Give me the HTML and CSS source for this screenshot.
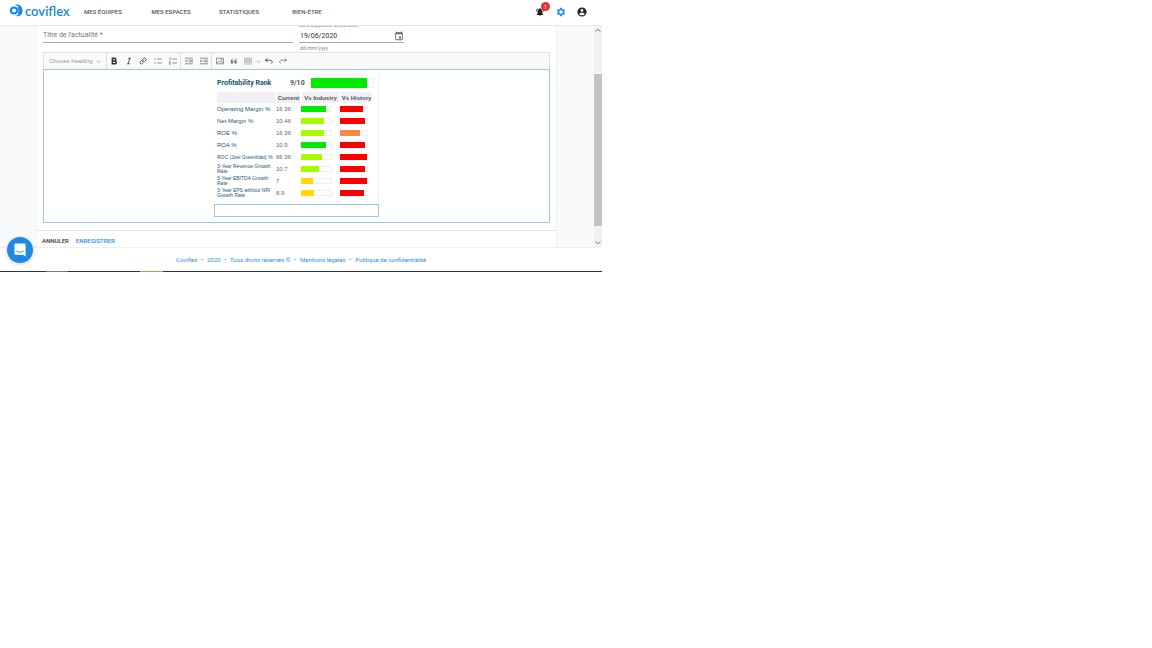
FILE: index.html
```html
<!DOCTYPE html>
<html lang="fr">
<head>
<meta charset="utf-8">
<meta name="viewport" content="width=device-width, initial-scale=1">
<title>Coviflex</title>
<link rel="stylesheet" href="styles.css">
</head>
<body>
<div class="app">
  <header class="header">
    <a class="logo" href="#">
      <svg class="logo-mark" viewBox="0 0 26 26" aria-hidden="true"><path d="M10 2C16-1 25 3 25 13S16 27 10 23C16 24 20 19 20 13S16 3 10 2Z" fill="#1786e8"/><circle cx="8" cy="13" r="6" fill="none" stroke="#1786e8" stroke-width="4"/><path d="M17 6q5 7 0 14" fill="none" stroke="#1786e8" stroke-width="5"/></svg>
      <span>coviflex</span>
    </a>
    <nav class="nav">
      <a href="#">MES ÉQUIPES</a><a href="#">MES ESPACES</a><a href="#">STATISTIQUES</a><a href="#">BIEN-ÊTRE</a>
    </nav>
    <div class="tools">
      <button class="tool" aria-label="Notifications"><svg viewBox="0 0 24 24"><path d="M7.6 4.1 6.200 2.700C3.800 4.500 2.200 7.300 2 10.500h2c.15-2.650 1.500-5 3.600-6.400zM20 10.500h2c-.15-3.200-1.700-6-4.100-7.800l-1.400 1.400c2 1.400 3.300 3.700 3.500 6.400zM18 11c0-3.100-1.600-5.600-4.500-6.300V4a1.500 1.500 0 0 0-3 0v.7C7.600 5.400 6 7.900 6 11v5l-2 2v1h16v-1l-2-2zM12 22a2 2 0 0 0 2-2h-4a2 2 0 0 0 2 2z"/></svg><span class="badge">1</span></button>
      <button class="tool tool-active" aria-label="Paramètres"><svg viewBox="0 0 24 24"><path fill-rule="evenodd" d="M19.400 13c.1-.7.1-1.300 0-2l2.100-1.600c.2-.2.200-.4.100-.6l-2-3.500c-.1-.2-.4-.3-.6-.2l-2.500 1c-.5-.4-1.100-.7-1.700-1l-.4-2.700c0-.2-.2-.4-.5-.4h-4c-.2 0-.4.200-.5.4L9 5.100c-.6.2-1.200.6-1.700 1l-2.500-1c-.2-.1-.5 0-.6.2l-2 3.500c-.1.200-.1.500.1.600L4.500 11c-.1.700-.1 1.300 0 2l-2.200 1.600c-.2.200-.2.400-.1.600l2 3.500c.1.200.4.300.6.200l2.500-1c.5.400 1.100.7 1.700 1l.4 2.700c.1.200.3.400.5.400h4c.3 0 .5-.2.500-.4l.4-2.700c.6-.2 1.200-.6 1.700-1l2.500 1c.2.100.5 0 .6-.2l2-3.500c.1-.2.100-.4-.1-.6zM12 16a4 4 0 1 1 0-8 4 4 0 0 1 0 8z"/></svg></button>
      <button class="tool" aria-label="Mon compte"><svg viewBox="0 0 24 24"><path fill-rule="evenodd" d="M12 1a11 11 0 1 0 0 22 11 11 0 0 0 0-22zm0 4a3.500 3.500 0 1 1 0 7 3.500 3.500 0 0 1 0-7zm0 15c-3 0-5.200-1.200-6.500-3.500C6 14.500 9.500 13.500 12 13.500s6 1 6.500 3C17.200 18.800 15 20 12 20z"/></svg></button>
    </div>
  </header>

  <main class="main">
    <div class="page">
      <form class="card">
        <div class="fields">
          <div class="field field-title">
            <label class="placeholder" for="title">Titre de l'actualité *</label>
            <input class="input" id="title" type="text">
          </div>
          <div class="field field-date">
            <label class="label" for="date">Date supposée de parution</label>
            <div class="date-line">
              <input class="input" id="date" type="text" value="19/06/2020">
              <button class="calendar" type="button" aria-label="Calendrier"><svg viewBox="0 0 24 24"><path fill-rule="evenodd" d="M5 3h1V1h2v2h8V1h2v2h1a2 2 0 0 1 2 2v15a2 2 0 0 1-2 2H5a2 2 0 0 1-2-2V5c0-1.100.9-2 2-2zm0 5v12h14V8zm7 5h5v5h-5z"/></svg></button>
            </div>
            <small class="hint">dd/mm/yyyy</small>
          </div>
        </div>

        <div class="editor">
          <div class="toolbar">
            <div class="heading">
              <select class="heading-select" aria-label="Choose heading"><option>Choose heading</option></select>
              <svg class="chevron" viewBox="0 0 10 10"><path d="m1 3 4 4 4-4"/></svg>
            </div>
            <div class="group group-text">
              <button type="button" class="btn" aria-label="Gras"><svg viewBox="0 0 20 20"><path class="heavy" d="M6 3h5a3.500 3.500 0 0 1 0 7H6zM6 10h6a3.500 3.500 0 0 1 0 7H6z"/></svg></button>
              <button type="button" class="btn" aria-label="Italique"><svg viewBox="0 0 20 20"><path class="dark" d="M8 3h7M5 17h7M12 3 8 17"/></svg></button>
              <button type="button" class="btn" aria-label="Lien"><svg viewBox="0 0 20 20"><path class="dark" d="m9 6 3-3c3-2 7 2 5 5l-4 4c-2 1-4 0-5-2M11 14l-3 3c-3 2-7-2-5-5l4-4c2-1 4 0 5 2"/></svg></button>
              <button type="button" class="btn" aria-label="Liste à puces"><svg viewBox="0 0 20 20"><path d="M8 5h12M8 15h12M0 5h4M0 15h4"/></svg></button>
              <button type="button" class="btn" aria-label="Liste numérotée"><svg viewBox="0 0 20 20"><path d="M8 5h12M8 15h12M1 3l2-1v6M0 12h4l-4 6h4"/></svg></button>
            </div>
            <div class="group">
              <button type="button" class="btn" aria-label="Augmenter le retrait"><svg viewBox="0 0 20 20"><path d="M0 3h20M9 8h11M9 12h11M0 17h20M0 10h5M3 7l3 3-3 3"/></svg></button>
              <button type="button" class="btn" aria-label="Réduire le retrait"><svg viewBox="0 0 20 20"><path d="M0 3h20M9 8h11M9 12h11M0 17h20M1 10h5M4 7l-3 3 3 3"/></svg></button>
            </div>
            <div class="group group-insert">
              <button type="button" class="btn" aria-label="Image"><svg viewBox="0 0 20 20"><path d="M1 3h18v14H1zM3 15l5-5 3 3 2-2 4 4M13 6h2v2h-2z"/></svg></button>
              <button type="button" class="btn" aria-label="Citation"><svg viewBox="0 0 20 20"><path d="M8 4C4 5 3 8 3 11M17 4c-4 1-5 4-5 7"/><path class="solid" d="M2 9h6v7H2zM11 9h6v7h-6z"/></svg></button>
              <button type="button" class="btn btn-table" aria-label="Tableau"><svg viewBox="0 0 20 20"><path class="thin" d="M1 3h18v15H1zM1 5h18M1 9h18M1 13h18M7 4v13M13 4v13"/></svg><svg class="chevron" viewBox="0 0 10 10"><path d="m1 3 4 4 4-4"/></svg></button>
              <button type="button" class="btn" aria-label="Annuler la saisie"><svg viewBox="0 0 20 20"><path class="dark" d="M6 4 1 8l5 4M1 8h12c7 0 6 7 2 8"/></svg></button>
              <button type="button" class="btn" aria-label="Rétablir"><svg viewBox="0 0 20 20"><path d="m14 4 5 4-5 4M19 8H7c-7 0-6 7-2 8"/></svg></button>
            </div>
          </div>

          <div class="content">
            <figure class="figure">
              <div class="ranking">
                <div class="rank"><strong class="rank-name">Profitability Rank</strong><strong class="rank-value">9/10</strong><span class="bar bar-rank"><i class="fill green" style="width:90%"></i></span></div>
                <table class="table">
                  <thead><tr><th class="col-name"></th><th class="col-current">Current</th><th class="col-industry">Vs Industry</th><th>Vs History</th></tr></thead>
                  <tbody>
                    <tr><td>Operating Margin %</td><td>16.36</td><td><span class="bar bar-industry"><i class="fill green" style="width:84%"></i></span></td><td><span class="bar"><i class="fill red" style="width:85%"></i></span></td></tr>
                    <tr><td>Net Margin %</td><td>10.46</td><td><span class="bar bar-industry"><i class="fill lime" style="width:78%"></i></span></td><td><span class="bar"><i class="fill red" style="width:94%"></i></span></td></tr>
                    <tr><td>ROE %</td><td>16.36</td><td><span class="bar bar-industry"><i class="fill lime" style="width:78%"></i></span></td><td><span class="bar"><i class="fill orange" style="width:75%"></i></span></td></tr>
                    <tr><td>ROA %</td><td>10.9</td><td><span class="bar bar-industry"><i class="fill green" style="width:84%"></i></span></td><td><span class="bar"><i class="fill red" style="width:92%"></i></span></td></tr>
                    <tr class="compact"><td>ROC (Joel Greenblatt) %</td><td>66.36</td><td><span class="bar bar-industry"><i class="fill lime" style="width:71%"></i></span></td><td><span class="bar"><i class="fill red" style="width:100%"></i></span></td></tr>
                    <tr class="compact"><td>3-Year Revenue Growth<br>Rate</td><td>10.7</td><td><span class="bar bar-industry"><i class="fill lime" style="width:60%"></i></span></td><td><span class="bar"><i class="fill red" style="width:92%"></i></span></td></tr>
                    <tr class="compact"><td>3-Year EBITDA Growth<br>Rate</td><td>7</td><td><span class="bar bar-industry"><i class="fill yellow" style="width:40%"></i></span></td><td><span class="bar"><i class="fill red" style="width:100%"></i></span></td></tr>
                    <tr class="compact"><td>3-Year EPS without NRI<br>Growth Rate</td><td>8.9</td><td><span class="bar bar-industry"><i class="fill yellow" style="width:44%"></i></span></td><td><span class="bar"><i class="fill red" style="width:89%"></i></span></td></tr>
                  </tbody>
                </table>
              </div>
              <figcaption class="caption" contenteditable="true"></figcaption>
            </figure>
          </div>
        </div>

        <div class="actions"><button type="button" class="action">ANNULER</button><button type="button" class="action action-save">ENREGISTRER</button></div>
      </form>
    </div>
    <div class="scrollbar" aria-hidden="true">
      <svg class="arrow" viewBox="0 0 10 10"><path d="m2 7 3-3 3 3"/></svg>
      <div class="track"><div class="thumb"></div></div>
      <svg class="arrow" viewBox="0 0 10 10"><path d="m2 3 3 3 3-3"/></svg>
    </div>
  </main>

  <footer class="footer"><a href="#">Coviflex</a><span>•</span><a href="#">2020</a><span>•</span><a href="#">Tous droits réservés ©</a><span>•</span><a href="#">Mentions légales</a><span>•</span><a href="#">Politique de confidentialité</a></footer>
  <div class="edge"></div>
  <button class="chat" type="button" aria-label="Discussion"><svg viewBox="0 0 28 32"><path d="M4 1h20a3 3 0 0 1 3 3v27l-6-4H4a3 3 0 0 1-3-3V4a3 3 0 0 1 3-3z" fill="#fff"/><path d="M6 19q8 6 16 0" fill="none" stroke="#1e88e5" stroke-width="2" stroke-linecap="round"/></svg></button>
</div>
</body>
</html>
```
FILE: styles.css
```css
* { box-sizing: border-box; }
body { margin: 0; background: #fff; font-family: Roboto, "Liberation Sans", sans-serif; font-size: 7px; color: #333; }
a { color: inherit; text-decoration: none; }
button, input, select { margin: 0; padding: 0; border: 0; background: none; font: inherit; color: inherit; outline: 0; }
svg { display: block; }

.app { position: relative; max-width: 602px; }

.header { display: flex; align-items: center; height: 26px; padding: 0 15px 2px 10px; border-bottom: 1px solid #e4e4e4; }
.logo { display: flex; align-items: center; gap: 2px; width: 59px; color: #1786e8; font: 600 13px/14px Lato, sans-serif; padding-bottom: 2px; }
.logo-mark { width: 13px; height: 13px; flex: none; }
.nav { display: flex; }
.nav a { width: 68px; text-align: center; font-size: 6px; font-weight: 500; line-height: 10px; color: #555; }
.tools { display: flex; gap: 11px; margin-left: auto; }
.tool { position: relative; width: 10px; height: 10px; color: #222; }
.tool svg { width: 10px; height: 10px; fill: currentColor; }
.tool-active { color: #1e90f0; }
.badge { position: absolute; top: -5px; left: 6px; width: 9px; height: 9px; border-radius: 50%; background: #e53238; color: #fff; font-size: 6px; line-height: 9px; text-align: center; }

.main { display: flex; overflow: hidden; border-bottom: 1px solid #f0f0f0; }
.page { flex: 1; padding: 0 37px 0 36px; background: #f9fafc; }
.card { background: #fff; border: solid #f1f1f3; border-width: 0 1px; }
.fields { display: flex; gap: 6px; padding: 0 6px; margin-top: -5px; }
.field-title { display: grid; align-content: start; width: 250px; padding-top: 8px; }
.field-title > * { grid-area: 1 / 1; }
.field-date { width: 105px; }
.input { display: block; width: 100%; height: 14px; border-bottom: 1px solid #a8a8a8; font-size: 7px; line-height: 13px; color: #333; }
.placeholder { line-height: 13px; color: #777; }
.label, .hint { display: block; font-size: 5px; line-height: 8px; color: #888; }
.date-line { display: flex; border-bottom: 1px solid #a8a8a8; }
.date-line .input { flex: 1; min-width: 0; height: 13px; padding: 1px 0 0 1px; border: 0; }
.calendar { width: 10px; height: 13px; }
.calendar svg { width: 10px; height: 10px; fill: #666; }
.hint { padding: 1px 0 0 1px; }

.editor { margin: 0 6px; }
.toolbar { display: flex; height: 17px; border: 1px solid #e2e2e2; border-bottom: 0; background: #fafafa; }
.heading { display: flex; align-items: center; width: 63px; padding: 0 5px; border-right: 1px solid #ddd; }
.heading-select { flex: 1; min-width: 0; appearance: none; font: 6px/12px "Liberation Sans", sans-serif; color: #999; }
.chevron { width: 5px; height: 5px; fill: none; stroke: #777; stroke-width: 1; }
.group { display: flex; border-right: 1px solid #ddd; }
.group-text { width: 74px; }
.group-text .btn { flex: 1; width: auto; }
.btn { display: flex; align-items: center; justify-content: center; gap: 4px; width: 15px; }
.btn svg { width: 8px; height: 8px; fill: none; stroke: #777; stroke-width: 2; }
.btn .chevron { width: 5px; height: 5px; stroke-width: 1; }
.group-insert { border: 0; padding-left: 1px; }
.group-insert .btn { width: 14px; }
.group-insert .btn-table { width: 21px; padding-left: 2px; }
.btn .dark { stroke: #333; }
.btn .heavy { stroke: #333; stroke-width: 4; }
.btn .thin { stroke-width: 1; }
.btn .solid { fill: #777; stroke: none; }

.content { padding: 5px 0; border: 1px solid #9bc7ee; }
.figure { width: 165px; margin: 0 auto; }
.ranking { padding: 1px 4px 2px 3px; border-right: 1px solid #eee; font-family: "Liberation Sans", sans-serif; }
.rank { display: flex; align-items: center; height: 14px; }
.rank-name { width: 73px; font-family: Roboto, sans-serif; font-size: 7px; color: #1d5576; }
.rank-value { width: 21px; font-family: Roboto, sans-serif; font-size: 7px; color: #555; }
.table { width: 100%; table-layout: fixed; border-collapse: collapse; font-size: 6px; line-height: 6px; color: #666; margin-top: 2px; }
.table th { height: 11px; padding: 0; background: #f0f0f5; font-size: 6px; font-weight: 700; color: #555; border-right: 2px solid #fff; white-space: nowrap; }
.table td { height: 12px; padding: 0; white-space: nowrap; }
.table td:first-child { color: #1d5576; }
.table .compact td:first-child { font-size: 5px; line-height: 5px; }
.col-name { width: 59px; }
.col-current { width: 25px; }
.col-industry { width: 39px; }
.bar { display: block; width: 28px; height: 6px; border: 1px solid #eee; border-left: 0; }
.bar-industry { width: 31px; }
.bar-rank { width: 63px; height: 10px; }
.fill { display: block; height: 100%; box-shadow: 0 1px, 0 -1px; background: currentColor; }
.green { color: #00ea00; }
.lime { color: #a7fb00; }
.orange { color: #f98b45; }
.yellow { color: #ffd900; }
.red { color: #fb0000; }
.caption { height: 13px; margin-top: 3px; border: 1px solid #9bc7ee; }

.actions { display: flex; gap: 7px; margin-top: 7px; padding: 4px 5px 1px; border-top: 1px solid #e4e4e4; }
.action { font-size: 6px; font-weight: 500; line-height: 11px; }
.action-save { color: #1e90f0; }

.scrollbar { display: flex; flex-direction: column; width: 8px; background: #f1f1f1; }
.arrow { width: 8px; height: 8px; fill: none; stroke: #555; stroke-width: 1; }
.track { flex: 1; padding: 40px 0 13px; }
.thumb { height: 100%; background: #c4c4c4; }

.footer { display: flex; align-items: center; justify-content: center; gap: 4px; height: 23px; font-size: 6px; color: #1e90f0; }
.footer span { font-size: 5px; color: #555; }
.edge { height: 1px; background: linear-gradient(90deg, #333 0 46px, #777 46px 68px, #333 68px 140px, #d58b45 140px 163px, #333 163px); }
.chat { position: absolute; left: 7px; bottom: 9px; display: grid; place-items: center; width: 26px; height: 26px; border-radius: 50%; background: #1e88e5; box-shadow: 0 1px 4px #0003; }
.chat svg { width: 12px; height: 14px; }
```
